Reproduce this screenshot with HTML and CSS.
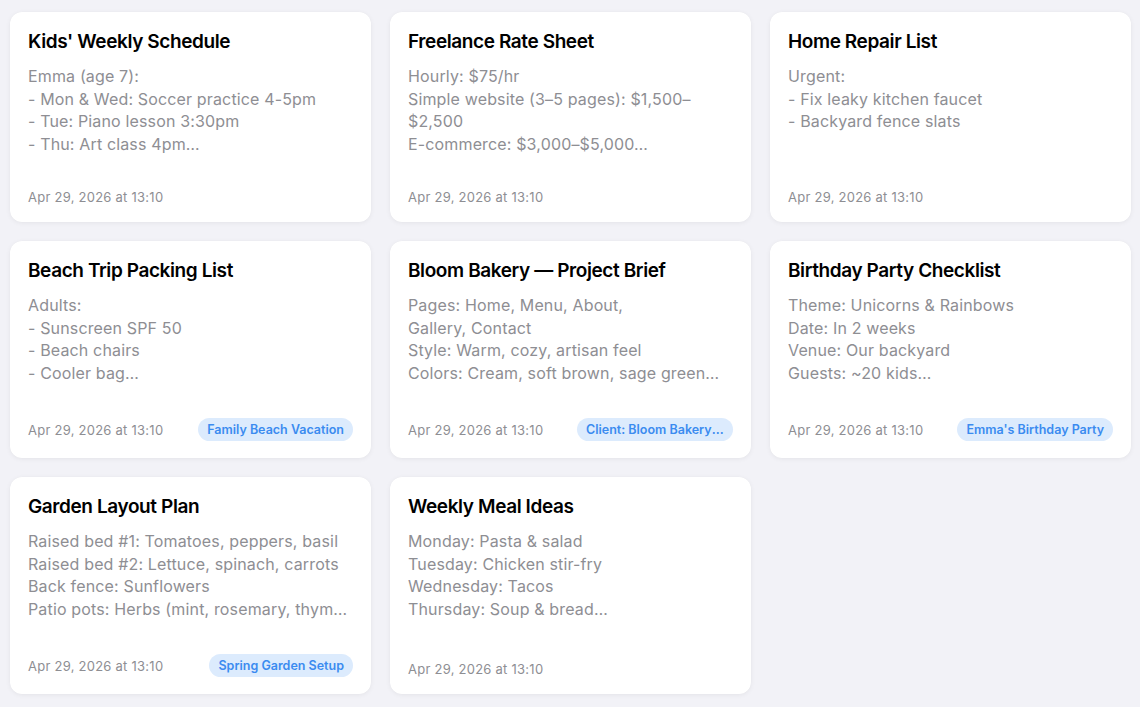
FILE: index.html
```html
<!DOCTYPE html>
<html lang="en">
<head>
<meta charset="utf-8">
<title>Notes</title>
<link rel="stylesheet" href="styles.css">
</head>
<body>
<main class="grid">
  <article class="card">
    <h2 class="title">Kids' Weekly Schedule</h2>
    <div class="body">
      <div class="line">Emma (age 7):</div>
      <div class="line">- Mon &amp; Wed: Soccer practice 4-5pm</div>
      <div class="line">- Tue: Piano lesson 3:30pm</div>
      <div class="line">- Thu: Art class 4pm…</div>
    </div>
    <div class="footer"><span class="date">Apr 29, 2026 at 13:10</span></div>
  </article>
  <article class="card">
    <h2 class="title">Freelance Rate Sheet</h2>
    <div class="body">
      <div class="line">Hourly: $75/hr</div>
      <div class="line">Simple website (3–5 pages): $1,500–</div>
      <div class="line">$2,500</div>
      <div class="line">E-commerce: $3,000–$5,000…</div>
    </div>
    <div class="footer"><span class="date">Apr 29, 2026 at 13:10</span></div>
  </article>
  <article class="card">
    <h2 class="title">Home Repair List</h2>
    <div class="body">
      <div class="line">Urgent:</div>
      <div class="line">- Fix leaky kitchen faucet</div>
      <div class="line">- Backyard fence slats</div>
    </div>
    <div class="footer"><span class="date">Apr 29, 2026 at 13:10</span></div>
  </article>

  <article class="card">
    <h2 class="title">Beach Trip Packing List</h2>
    <div class="body">
      <div class="line">Adults:</div>
      <div class="line">- Sunscreen SPF 50</div>
      <div class="line">- Beach chairs</div>
      <div class="line">- Cooler bag…</div>
    </div>
    <div class="footer"><span class="date">Apr 29, 2026 at 13:10</span><span class="badge">Family Beach Vacation</span></div>
  </article>
  <article class="card">
    <h2 class="title">Bloom Bakery — Project Brief</h2>
    <div class="body">
      <div class="line">Pages: Home, Menu, About,</div>
      <div class="line">Gallery, Contact</div>
      <div class="line">Style: Warm, cozy, artisan feel</div>
      <div class="line">Colors: Cream, soft brown, sage green…</div>
    </div>
    <div class="footer"><span class="date">Apr 29, 2026 at 13:10</span><span class="badge">Client: Bloom Bakery Website Redesign</span></div>
  </article>
  <article class="card">
    <h2 class="title">Birthday Party Checklist</h2>
    <div class="body">
      <div class="line">Theme: Unicorns &amp; Rainbows</div>
      <div class="line">Date: In 2 weeks</div>
      <div class="line">Venue: Our backyard</div>
      <div class="line">Guests: ~20 kids…</div>
    </div>
    <div class="footer"><span class="date">Apr 29, 2026 at 13:10</span><span class="badge">Emma's Birthday Party</span></div>
  </article>

  <article class="card">
    <h2 class="title">Garden Layout Plan</h2>
    <div class="body">
      <div class="line">Raised bed #1: Tomatoes, peppers, basil</div>
      <div class="line">Raised bed #2: Lettuce, spinach, carrots</div>
      <div class="line">Back fence: Sunflowers</div>
      <div class="line">Patio pots: Herbs (mint, rosemary, thym…</div>
    </div>
    <div class="footer"><span class="date">Apr 29, 2026 at 13:10</span><span class="badge">Spring Garden Setup</span></div>
  </article>
  <article class="card">
    <h2 class="title">Weekly Meal Ideas</h2>
    <div class="body">
      <div class="line">Monday: Pasta &amp; salad</div>
      <div class="line">Tuesday: Chicken stir-fry</div>
      <div class="line">Wednesday: Tacos</div>
      <div class="line">Thursday: Soup &amp; bread…</div>
    </div>
    <div class="footer"><span class="date">Apr 29, 2026 at 13:10</span></div>
  </article>
</main>
</body>
</html>
```
FILE: styles.css
```css
* { box-sizing: border-box; }
html, body {
  margin: 0;
  padding: 0;
  background: #f2f2f7;
  font-family: Inter, "Noto Sans", "Liberation Sans", sans-serif;
  -webkit-font-smoothing: antialiased;
}
.grid {
  display: grid;
  grid-template-columns: repeat(3, 1fr);
  gap: 19px;
  padding: 12px 9px 14px 10px;
}
.card {
  background: #ffffff;
  border-radius: 12px;
  box-shadow: 0 1px 5px rgba(0, 0, 0, 0.06), 0 0 1px rgba(0, 0, 0, 0.04);
  padding: 17px 18px 17px 18px;
  display: flex;
  flex-direction: column;
  min-width: 0;
}
.title {
  margin: 0;
  font-size: 19px;
  line-height: 25px;
  font-weight: 600;
  color: #000000;
  letter-spacing: -0.4px;
}
.body {
  margin-top: 11px;
  margin-bottom: 34px;
  font-size: 16px;
  line-height: 22.5px;
  color: #8e8e93;
  letter-spacing: 0.15px;
}
.line {
  white-space: nowrap;
  overflow: hidden;
  text-overflow: ellipsis;
}
.footer {
  margin-top: auto;
  display: flex;
  align-items: center;
  justify-content: space-between;
  gap: 8px;
  min-height: 16px;
}
.date {
  flex: none;
  font-size: 13px;
  line-height: 16px;
  color: #8e8e93;
  letter-spacing: 0.25px;
}
.badge {
  min-width: 0;
  max-width: 156px;
  white-space: nowrap;
  overflow: hidden;
  text-overflow: ellipsis;
  background: #dcebfd;
  color: #3b8bf0;
  font-size: 12.5px;
  font-weight: 600;
  line-height: 23px;
  height: 23px;
  padding: 0 9px;
  border-radius: 12px;
}
```
